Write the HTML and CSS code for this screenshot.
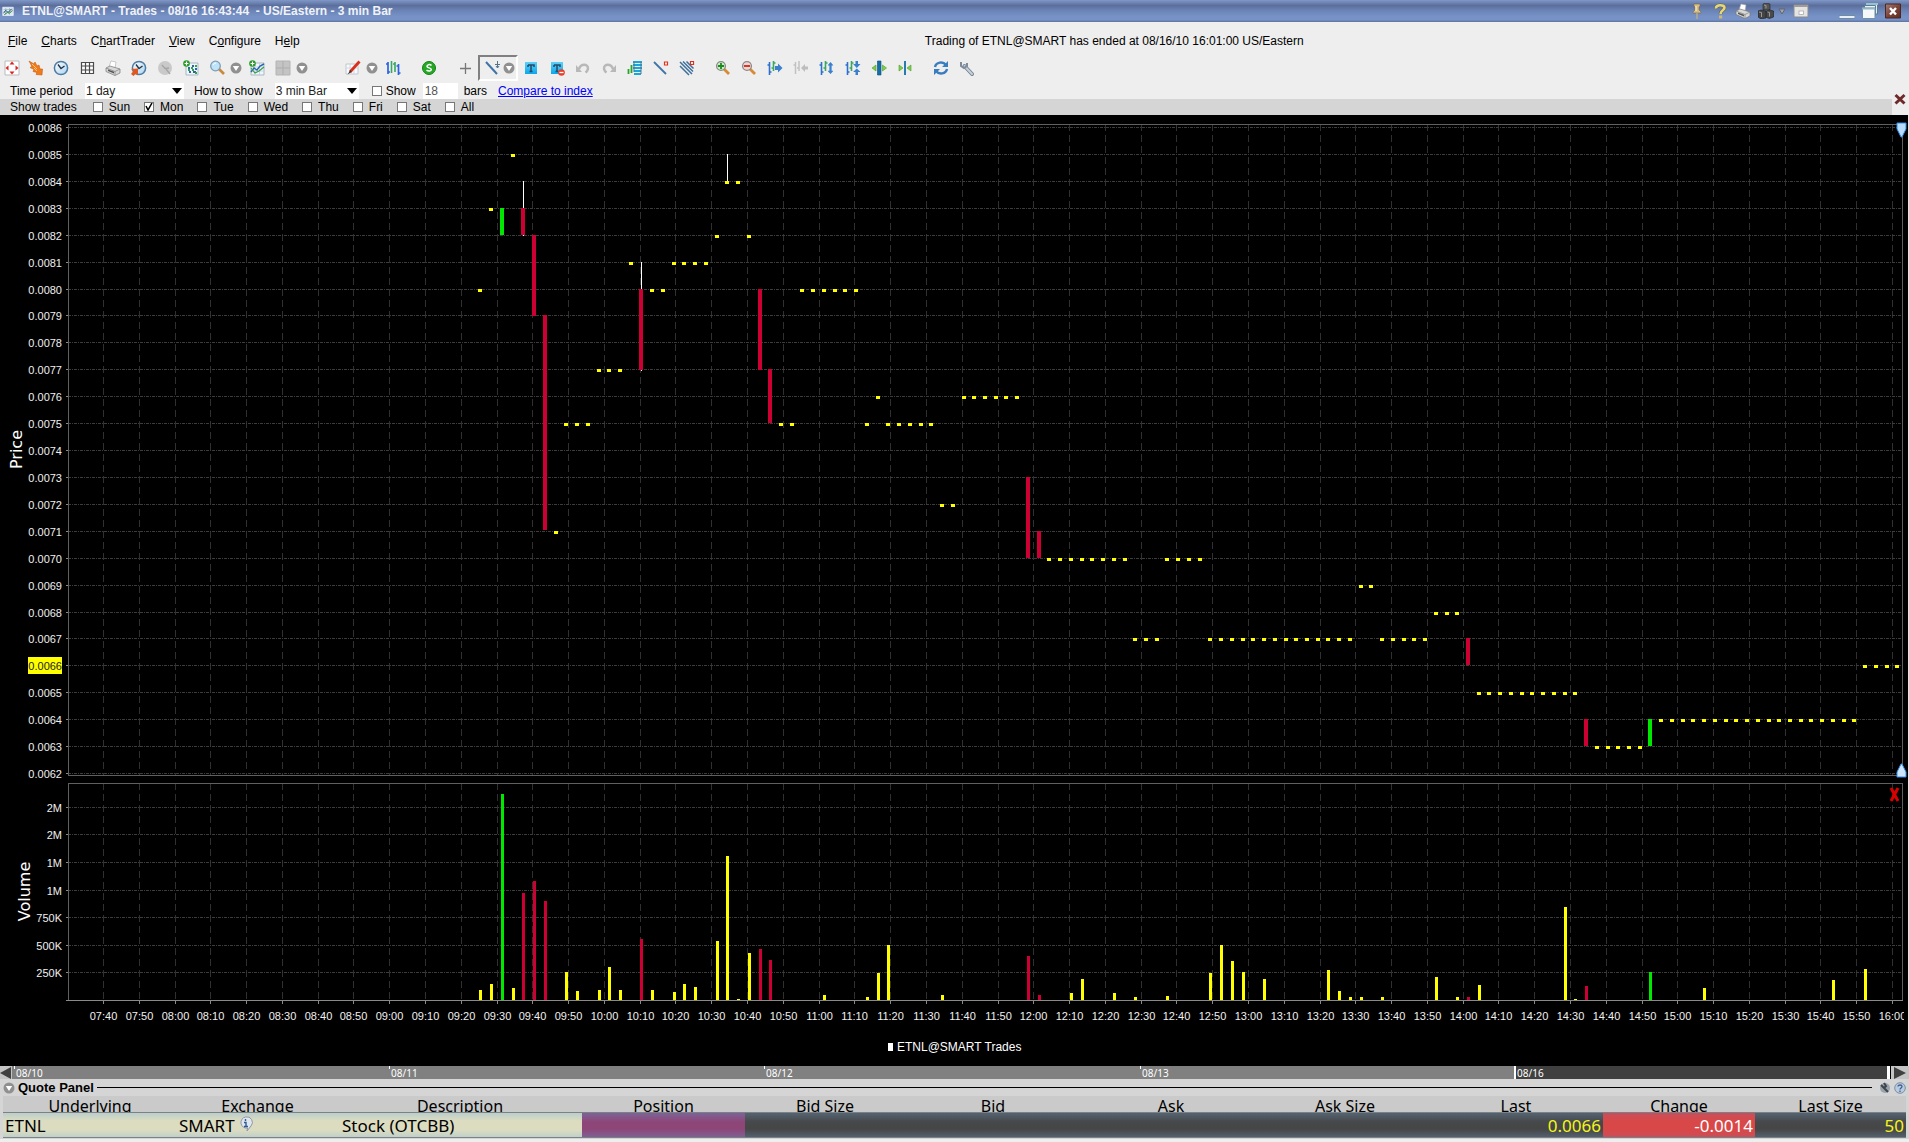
FILE: index.html
```html
<!DOCTYPE html>
<html lang="en">
<head>
<meta charset="utf-8">
<title>ETNL@SMART - Trades</title>
<link rel="stylesheet" href="styles.css">
</head>
<body>
<svg class="defs" aria-hidden="true">
  <defs>
    <linearGradient id="gBlue" x1="0" y1="0" x2="0" y2="1"><stop offset="0" stop-color="#5fd0f8"/><stop offset="1" stop-color="#0aa8ec"/></linearGradient>
    <linearGradient id="gFace" x1="0" y1="0" x2="1" y2="1"><stop offset="0" stop-color="#fff"/><stop offset="1" stop-color="#a9d3f0"/></linearGradient>
    <linearGradient id="gDark" x1="0" y1="0" x2="1" y2="1"><stop offset="0" stop-color="#a08080"/><stop offset=".5" stop-color="#7d4438"/><stop offset="1" stop-color="#5e2a20"/></linearGradient>
  </defs>
  <symbol id="i-drop" viewBox="0 0 12 12"><circle cx="6" cy="6" r="5.5" fill="#909090"/><path d="M2.8 4h6.4L6 9z" fill="#fff"/></symbol>
  <symbol id="i-bars" viewBox="0 0 16 16"><path d="M3.500 2v13M1.500 5h2M3.500 12h2" stroke="#2f6fd0" stroke-width="1.6" fill="none"/><path d="M7.500 1v10M5.500 8h2M7.500 3h2" stroke="#3aa95a" stroke-width="1.6" fill="none"/></symbol>
  <symbol id="i-printer" viewBox="0 0 16 16"><path d="M4 7 6 1l5 1-1 6z" fill="#fff" stroke="#aaa" stroke-width=".6"/><path d="M1 8l4-2 10 3v4l-5 2.500-9-4z" fill="#d8d8d8" stroke="#777" stroke-width=".7"/><path d="M1 8l9 3.500 5-2.500M10 11.500v4" stroke="#888" fill="none" stroke-width=".8"/><path d="M3 9.500l6 2.300v1.700l-6-2.500z" fill="#555"/></symbol>
  <symbol id="i-clock" viewBox="0 0 16 16"><circle cx="8" cy="8" r="6.600" fill="url(#gFace)" stroke="#4b7ca5" stroke-width="1.500"/><path d="M5 4.500 8 8.500l3.500-2.500" stroke="#234" stroke-width="1.300" fill="none"/></symbol>
  <symbol id="i-plus" viewBox="0 0 8 8"><circle cx="4" cy="4" r="3.800" fill="#2a9a2a"/><path d="M4 1.800v4.400M1.800 4h4.400" stroke="#fff" stroke-width="1.300"/></symbol>
  <symbol id="i-chart" viewBox="0 0 16 16"><path d="M2 3h13v12H2z" fill="#eef5fb" stroke="#a9b7c4"/><path d="M2 7h13M2 11h13M6 3v12M10.500 3v12" stroke="#bccbd8" stroke-width=".7"/><path d="M2 12l3-4 3 2 3-4 4-2" stroke="#2b62b5" stroke-width="1.400" fill="none"/><path d="M2 8l4 5 4-2 5-4" stroke="#36a043" stroke-width="1.200" fill="none"/></symbol>
  <symbol id="i-updown" viewBox="0 0 8 16"><path d="M4 0l4 4.500H5.500v7H8L4 16l-4-4.500h2.500v-7H0z" fill="#3b7fcf"/></symbol>
</svg>

<header class="titlebar">
  <svg class="ico" viewBox="0 0 16 16"><path d="M1 3h14v11H1z" fill="#dfe9f2" stroke="#eef"/><path d="M2 6h12M2 9h12M5 4v9M10 4v9" stroke="#91a8b4" stroke-width=".8"/><path d="M2 11l3-4 3 3 5-5" stroke="#175b80" stroke-width="1.300" fill="none"/><path d="M3 13l4-3 3 1 4-4" stroke="#2e8a3a" stroke-width="1.300" fill="none"/></svg>
  <h1>ETNL@SMART - Trades - 08/16 16:43:44&nbsp; - US/Eastern - 3 min Bar</h1>
  <div class="winbtns">
    <button type="button" aria-label="Pin"><svg class="ico" viewBox="0 0 16 16"><path d="M5 1h6v2l-1 1v3l2 2v1H4V9l2-2V4L5 3z" fill="#d6bd83" stroke="#7d6a45" stroke-width=".6"/><path d="M8 10v6" stroke="#c9b184" stroke-width="1.200"/><path d="M7 3v5" stroke="#fff3cc"/></svg></button>
    <button type="button" aria-label="Help"><svg class="ico" viewBox="0 0 16 16"><path d="M4 5.500C3.500 1.500 12.500 1 12.500 4.800 12.500 7.500 8.500 7 8.500 11" fill="none" stroke="#6a6340" stroke-width="3.600"/><path d="M4 5.500C3.500 1.500 12.500 1 12.500 4.800 12.500 7.500 8.500 7 8.500 11" fill="none" stroke="#e2d67e" stroke-width="2.600"/><path d="M7 12.500h3.200v3H7z" fill="#d3b56e"/></svg></button>
    <button type="button" aria-label="Print"><svg class="ico" viewBox="0 0 16 16"><use href="#i-printer"/></svg></button>
    <button type="button" aria-label="Group"><svg class="ico" viewBox="0 0 16 16"><path d="M5 1l3-1 4 1v6H5z" fill="#555" stroke="#222" stroke-width=".6"/><path d="M0 8l3-1 5 1v7l-5 1-3-2z" fill="#444" stroke="#1c1c1c" stroke-width=".6"/><path d="M8.500 8l3-1 4 1v6l-4 1.500-3-1z" fill="#4a4a4a" stroke="#1c1c1c" stroke-width=".6"/><path d="M6 2l2 .5v3M1 9l2.500.5V14M9.500 9l2 .5v4" stroke="#9a9a9a" fill="none"/></svg></button>
    <button type="button" class="slim" aria-label="Group menu"><svg class="ico-s" viewBox="0 0 12 12"><path d="M3 4h6L6 9z" fill="#9fa5ad" stroke="#62676f"/></svg></button>
    <button type="button" class="wide" aria-label="Window mode"><svg class="ico" viewBox="0 0 16 16"><path d="M1 2h14v12H1z" fill="#e4e4e4" stroke="#8c8c8c"/><path d="M1 2h14v2H1z" fill="#a19c98"/><rect x="6" y="8" width="4.500" height="3.500" fill="#fff" stroke="#aaa" stroke-width=".8"/></svg></button>
    <button type="button" class="min" aria-label="Minimize"><svg class="ico" viewBox="0 0 16 16"><path d="M0 12.500h16v3H0z" fill="#e8eef2" stroke="#6b8ea3"/></svg></button>
    <button type="button" aria-label="Restore"><svg class="ico" viewBox="0 0 16 16"><path d="M4.500 0h11v11h-11z" fill="#e6ecf0" stroke="#567d92"/><path d="M4 0h12v2H4z" fill="#9cc0d0"/><path d="M2.500 2.500h11v10h-11z" fill="#eef2f5" stroke="#567d92"/><path d="M.5 5h12.500v10.500H.5z" fill="#f6f8fa" stroke="#6e93a6"/><path d="M0 4.500h13v2H0z" fill="#8fb6c8"/></svg></button>
    <button type="button" aria-label="Close window"><svg class="ico" viewBox="0 0 16 16"><path d="M.5 1h15v14H.5z" fill="url(#gDark)" stroke="#4b2720"/><path d="M5 5l6 6.500M11 5l-6 6.500" stroke="#fff" stroke-width="2.400"/></svg></button>
  </div>
</header>

<div class="menubar">
  <nav class="menus">
    <button type="button"><u>F</u>ile</button>
    <button type="button"><u>C</u>harts</button>
    <button type="button">C<u>h</u>artTrader</button>
    <button type="button"><u>V</u>iew</button>
    <button type="button">C<u>o</u>nfigure</button>
    <button type="button">H<u>e</u>lp</button>
  </nav>
  <p class="notice">Trading of ETNL@SMART has ended at 08/16/10 16:01:00 US/Eastern</p>
</div>

<div class="toolbar">
  <button type="button" class="tight" aria-label="Fit"><svg class="ico" viewBox="0 0 16 16"><path d="M1 1h14v14H1z" fill="#fff" stroke="#bbb"/><path d="M8 1.500 10.500 4.500h-5zM8 14.500 10.500 11.500h-5zM1.500 8l3-2.500v5zM14.500 8l-3-2.500v5z" fill="#e02020"/></svg></button>
  <button type="button" class="tight" aria-label="Pointer"><svg class="ico" viewBox="0 0 16 16"><path d="M1 1l5 3 1-2 2 4 2-1 1 4 2.500 0-.5 6-6-.5 1-2-4-1 1-2-4-2 2-1z" fill="#f07b1a" stroke="#c65a10" stroke-width=".6"/><path d="M4 4l5 5M6 8l3 3" stroke="#ffc07a"/></svg></button>
  <button type="button" aria-label="Time"><svg class="ico" viewBox="0 0 16 16"><use href="#i-clock"/></svg></button>
  <button type="button" aria-label="Grid"><svg class="ico" viewBox="0 0 16 16"><path d="M2.500 2.500h12v11h-12zM6.500 2.500v11M10.500 2.500v11M2.500 6h12M2.500 10h12" fill="#fff" stroke="#4c4c4c" stroke-width="1.200"/></svg></button>
  <button type="button" aria-label="Print chart"><svg class="ico" viewBox="0 0 16 16"><use href="#i-printer"/></svg></button>
  <button type="button" aria-label="Reset time"><svg class="ico" viewBox="0 0 16 16"><use href="#i-clock"/><path d="M0 9l7-.5v7L5 13.500 2.500 16 0 14l2.500-3z" fill="#e2571e"/></svg></button>
  <button type="button" disabled aria-label="Stop time"><svg class="ico" viewBox="0 0 16 16"><circle cx="8" cy="8" r="7" fill="#c9c9c9"/><path d="M5 5l3 3.500L12 8M9 9l4 5" stroke="#a5a5a5" stroke-width="1.300" fill="none"/></svg></button>
  <button type="button" aria-label="Add study"><svg class="ico" viewBox="0 0 16 16"><path d="M3 3h12v12H3z" fill="#eef5fb" stroke="#a9b7c4"/><path d="M5 8h2M9 6h2M12 9h2M6 12h2M10 12h3" stroke="#2b62b5" stroke-width="1.800"/><path d="M8 8h2M5 10h2M12 6h2M9 10h2M12 13h2" stroke="#36a043" stroke-width="1.800"/><svg x="0" y="0" width="7" height="7"><use href="#i-plus"/></svg></svg></button>
  <button type="button" aria-label="Search"><svg class="ico" viewBox="0 0 16 16"><path d="M10 9l5 5" stroke="#c98a3a" stroke-width="2.600"/><circle cx="6.500" cy="6" r="4.800" fill="#bfe4fa" stroke="#7f9db5" stroke-width="1.300"/><path d="M4 5q1-2 3-2" stroke="#fff" fill="none"/></svg></button>
  <button type="button" class="drop" aria-label="Search options"><svg class="ico-s"><use href="#i-drop"/></svg></button>
  <button type="button" aria-label="Add chart"><svg class="ico" viewBox="0 0 16 16"><use href="#i-chart"/><svg x="0" y="0" width="7" height="7"><use href="#i-plus"/></svg></svg></button>
  <button type="button" disabled aria-label="Layout"><svg class="ico" viewBox="0 0 16 16"><path d="M1 1h14v14H1z" fill="#c4c4c4" stroke="#b4b4b4"/><path d="M8 1v14M1 8h14" stroke="#adadad"/></svg></button>
  <button type="button" class="drop" aria-label="Layout options"><svg class="ico-s"><use href="#i-drop"/></svg></button>
  <span class="gap gap-wide"></span>
  <button type="button" aria-label="Draw"><svg class="ico" viewBox="0 0 16 16"><path d="M1 4h12v10H1z" fill="#f8fafc" stroke="#c0c8d0"/><path d="M1 8h12M5 4v10M9 4v10" stroke="#d0d8e0"/><path d="M14.500 1.500 5 12" stroke="#d8301c" stroke-width="2.800"/><path d="M5.500 10 2.500 14.500l4-2.500z" fill="#333"/></svg></button>
  <button type="button" class="drop" aria-label="Draw options"><svg class="ico-s"><use href="#i-drop"/></svg></button>
  <button type="button" aria-label="Bar style"><svg class="ico" viewBox="0 0 16 16"><path d="M3 2v12M1 4h2M3 12h2M13.500 4v11M11.500 6h2M13.500 13h2" stroke="#2d62e0" stroke-width="1.700" fill="none"/><path d="M6.500 1v12M10 2v10M8 4h2" stroke="#38a860" stroke-width="1.600" fill="none"/></svg></button>
  <span class="gap"></span>
  <button type="button" aria-label="Trade"><svg class="ico" viewBox="0 0 16 16"><circle cx="8" cy="8" r="6.500" fill="#25a825" stroke="#168016"/><path d="M10.500 5.500C9 4 5.800 4.500 6 6.500c.2 1.800 4.300 1 4.300 3 0 1.700-3 2-4.800.6" stroke="#fff" stroke-width="1.500" fill="none"/></svg></button>
  <span class="gap"></span>
  <button type="button" aria-label="Crosshair"><svg class="ico" viewBox="0 0 16 16"><path d="M8.500 3v11M3 8.500h11" stroke="#777" stroke-width="1.300"/></svg></button>
  <div class="pressed">
    <button type="button" aria-label="Trend line"><svg class="ico" viewBox="0 0 16 16"><path d="M1 2l11 12" stroke="#3f74a8" stroke-width="2"/><path d="M12.500 1v7M10 4.500h5M11 6l1.500 2L14 6" stroke="#56748c" fill="none"/></svg></button>
    <button type="button" class="drop" aria-label="Line options"><svg class="ico-s"><use href="#i-drop"/></svg></button>
  </div>
  <button type="button" aria-label="Text"><svg class="ico" viewBox="0 0 16 16"><path d="M2 2h12v12H2z" fill="url(#gBlue)"/><path d="M5 5h6v2M5 5v2M8 5v7M6.500 11.500h3" stroke="#274a66" stroke-width="1.500" fill="none"/></svg></button>
  <button type="button" aria-label="Remove text"><svg class="ico" viewBox="0 0 16 16"><path d="M2 2h12v12H2z" fill="url(#gBlue)"/><path d="M5 5h6v2M5 5v2M8 5v7M6.500 11.500h3" stroke="#274a66" stroke-width="1.500" fill="none"/><circle cx="12.500" cy="12.500" r="3.300" fill="#e8402a"/><path d="M10.500 12.500h4" stroke="#fff" stroke-width="1.300"/></svg></button>
  <button type="button" disabled aria-label="Undo"><svg class="ico" viewBox="0 0 16 16"><path d="M4 9C6 3 13 4 13 8c0 2-1 3.500-2.500 4.500" fill="none" stroke="#b8b8b8" stroke-width="2.400"/><path d="M1 5v7h6z" fill="#b8b8b8"/></svg></button>
  <button type="button" disabled aria-label="Redo"><svg class="ico" viewBox="0 0 16 16"><path d="M12 9C10 3 3 4 3 8c0 2 1 3.500 2.500 4.500" fill="none" stroke="#b8b8b8" stroke-width="2.400"/><path d="M15 5v7H9z" fill="#b8b8b8"/></svg></button>
  <button type="button" aria-label="Copy chart"><svg class="ico" viewBox="0 0 16 16"><path d="M6 2h9M6 5h9M6 8h9M7 11h7M7 14h7" stroke="#18a7d8" stroke-width="1.800"/><path d="M7 2v10M14 2v12" stroke="#4b7a96"/><path d="M1.500 9v5M4.500 5v8" stroke="#28a428" stroke-width="1.800"/></svg></button>
  <button type="button" aria-label="Delete line"><svg class="ico" viewBox="0 0 16 16"><path d="M1 2l12 12" stroke="#3f74a8" stroke-width="1.800"/><path d="M11.500 2h3v3h-3z" fill="#fff" stroke="#e03020" stroke-width="1.200"/></svg></button>
  <button type="button" aria-label="Delete all lines"><svg class="ico" viewBox="0 0 16 16"><path d="M1 2l12 12M4 1.500l10 10M1 6l9 9M7.500 1.500l7 7" stroke="#3f6f9c" stroke-width="1.500"/><path d="M11.500 1.500h3v3h-3z" fill="#fff" stroke="#e03020" stroke-width="1.200"/></svg></button>
  <span class="gap"></span>
  <button type="button" aria-label="Zoom in"><svg class="ico" viewBox="0 0 16 16"><path d="M9 9l5 5" stroke="#d88b35" stroke-width="2.800"/><circle cx="6" cy="6" r="4.400" fill="#cdebc5" stroke="#888" stroke-width="1.300"/><path d="M6 3v6M3 6h6" stroke="#1c8a1c" stroke-width="1.800"/></svg></button>
  <button type="button" aria-label="Zoom out"><svg class="ico" viewBox="0 0 16 16"><path d="M9 9l5 5" stroke="#d88b35" stroke-width="2.800"/><circle cx="6" cy="6" r="4.400" fill="#f5d5d0" stroke="#888" stroke-width="1.300"/><path d="M3 6h6" stroke="#d02818" stroke-width="1.800"/></svg></button>
  <button type="button" aria-label="Widen"><svg class="ico" viewBox="0 0 16 16"><svg x="-1" width="16" height="16"><use href="#i-bars"/></svg><path d="M8 6h3V3.500L15.500 8 11 12.500V10H8z" fill="#3b7fcf"/></svg></button>
  <button type="button" disabled aria-label="Narrow"><svg class="ico" viewBox="0 0 16 16"><path d="M2.500 2v12M.5 5h2M6 1v10M4 8h2" stroke="#c2c2c2" stroke-width="1.500"/><path d="M15 6.500h-3V4L8 8l4 4V9.500h3z" fill="#bdbdbd"/></svg></button>
  <button type="button" aria-label="Stretch price"><svg class="ico" viewBox="0 0 16 16"><svg x="-1" width="16" height="16"><use href="#i-bars"/></svg><svg x="8.500" y="1" width="6" height="14"><use href="#i-updown"/></svg></svg></button>
  <button type="button" aria-label="Compress price"><svg class="ico" viewBox="0 0 16 16"><svg x="-1" width="16" height="16"><use href="#i-bars"/></svg><path d="M10.500 1h2.500v3h2.500l-3.700 4-3.700-4h2.400zM10.500 15h2.500v-3h2.500l-3.700-3.500L8.100 12h2.400z" fill="#3b7fcf"/></svg></button>
  <button type="button" aria-label="Spread"><svg class="ico" viewBox="0 0 16 16"><path d="M6.500 1h3.500v14H6.500z" fill="#146fa8" stroke="#0a4a78" stroke-width=".6"/><path d="M5 5v6L1 8zM11.500 5v6l4-3z" fill="#7bd04a" stroke="#4f9a2a" stroke-width=".6"/></svg></button>
  <button type="button" aria-label="Tighten"><svg class="ico" viewBox="0 0 16 16"><path d="M8 1v14" stroke="#146fa8" stroke-width="1.800"/><path d="M2 5v6l4-3zM14 5v6l-4-3z" fill="#7bd04a" stroke="#4f9a2a" stroke-width=".6"/></svg></button>
  <span class="gap"></span>
  <button type="button" aria-label="Refresh"><svg class="ico" viewBox="0 0 16 16"><path d="M2 7c1-5 8-6 11-2M14 9c-1 5-8 6-11 2" fill="none" stroke="#3a7cc0" stroke-width="2.400"/><path d="M15 1v6H9zM1 15V9h6z" fill="#3a7cc0"/></svg></button>
  <button type="button" aria-label="Settings"><svg class="ico" viewBox="0 0 16 16"><path d="M5.500 6l7.500 8" stroke="#6d7b8c" stroke-width="3.800" stroke-linecap="round"/><path d="M5.500 6l7.500 8" stroke="#c6d0da" stroke-width="2.200" stroke-linecap="round"/><path d="M2 2v4l3 2 3-2V3" fill="none" stroke="#7d8b9b" stroke-width="2"/></svg></button>
</div>

<section class="options" aria-label="Chart options">
  <div class="row period">
    <label for="period">Time period</label>
    <select id="period" class="sel-period"><option>1 day</option></select>
    <label for="barsize">How to show</label>
    <select id="barsize" class="sel-bar"><option>3 min Bar</option></select>
    <label class="check show"><input type="checkbox">Show</label>
    <input type="text" class="count" id="count" value="18" aria-label="Number of bars">
    <label for="count">bars</label>
    <a href="#compare">Compare to index</a>
  </div>
  <div class="row days">
    <span>Show trades</span>
    <label class="check"><input type="checkbox">Sun</label>
    <label class="check"><input type="checkbox" checked>Mon</label>
    <label class="check"><input type="checkbox">Tue</label>
    <label class="check"><input type="checkbox">Wed</label>
    <label class="check"><input type="checkbox">Thu</label>
    <label class="check"><input type="checkbox">Fri</label>
    <label class="check"><input type="checkbox">Sat</label>
    <label class="check"><input type="checkbox">All</label>
  </div>
  <button type="button" class="close" aria-label="Close options"><svg class="ico-s" viewBox="0 0 12 12"><path d="M1.500 2l9 8.500M10.500 2l-9 8.500" stroke="#6e2a2a" stroke-width="3"/></svg></button>
</section>

<svg id="chart" class="chart" role="img" aria-label="ETNL@SMART trades, price and volume"></svg>

<div class="timeline">
  <button type="button" class="step" aria-label="Scroll back"><svg class="ico-s" viewBox="0 0 12 12"><path d="M11 0v12L0 6z" fill="#404040"/></svg></button>
  <span class="day">08/10</span>
  <span class="day">08/11</span>
  <span class="day">08/12</span>
  <span class="day">08/13</span>
  <span class="day current">08/16</span>
  <button type="button" class="step" aria-label="Scroll forward"><svg class="ico-s" viewBox="0 0 12 12"><path d="M0 0v12L12 6z" fill="#404040"/></svg></button>
</div>

<section class="quote">
  <div class="quote-head">
    <svg class="ico-s"><use href="#i-drop"/></svg>
    <h2>Quote Panel</h2>
    <hr>
    <svg class="ico-s" viewBox="0 0 12 12"><circle cx="6" cy="6" r="5" fill="#9aa4ac"/><path d="M2 3l3 3 2-2-2-3M5 6l4 4" stroke="#3e464d" stroke-width="2" fill="none"/></svg>
    <svg class="ico-s" viewBox="0 0 12 12"><circle cx="6" cy="6" r="5.300" fill="#b8cbe0" stroke="#7d8fa3"/><path d="M4 4.500C4 2.500 8 2.500 8 4.500 8 6 6 6 6 7.500M6 8.500V10" stroke="#3d6090" stroke-width="1.300" fill="none"/></svg>
  </div>
  <table>
    <colgroup><col class="c1"><col class="c2"><col class="c3"><col class="c4"><col class="c5"><col class="c6"><col class="c7"><col class="c8"><col class="c9"><col class="c10"><col class="c11"></colgroup>
    <thead><tr><th><span>Underlying</span></th><th><span>Exchange</span></th><th><span>Description</span></th><th><span>Position</span></th><th><span>Bid Size</span></th><th><span>Bid</span></th><th><span>Ask</span></th><th><span>Ask Size</span></th><th><span>Last</span></th><th><span>Change</span></th><th><span>Last Size</span></th></tr></thead>
    <tbody><tr>
      <td class="id">ETNL</td>
      <td class="id">SMART <svg class="info" viewBox="0 0 14 16"><path d="M6.500 1a5.500 5.500 0 1 0 2 11L8 15l4-5A5.500 5.500 0 0 0 6.500 1z" fill="#dfe6ef" stroke="#8b98a8"/><path d="M6.500 3v2M5 6.500h2v4M5 10.500h4" stroke="#31598f" stroke-width="1.400" fill="none"/></svg></td>
      <td class="id desc">Stock (OTCBB)</td>
      <td class="pos"></td><td></td><td></td><td></td><td></td>
      <td class="num">0.0066</td>
      <td class="num down">-0.0014</td>
      <td class="num">50</td>
    </tr></tbody>
  </table>
</section>
<script src="chart.js"></script>
</body>
</html>
```
FILE: styles.css
```css
* { box-sizing: border-box; }

body {
  margin: 0;
  min-height: 100vh;
  display: flex;
  flex-direction: column;
  background: #eee;
  color: #000;
  font: 12px/16px "Liberation Sans", Arial, sans-serif;
}

h1, h2, p { margin: 0; }

button {
  padding: 0;
  border: 0;
  background: none;
  color: inherit;
  font: inherit;
}

.defs { position: absolute; width: 0; height: 0; }
.ico { display: block; flex: none; width: 16px; height: 16px; }
.ico-s { display: block; flex: none; width: 12px; height: 12px; }

/* Title bar */
.titlebar {
  display: flex;
  align-items: center;
  height: 22px;
  padding-right: 5px;
  background: linear-gradient(#8098c8, #5c6f9c 25%, #6c85b8 50%, #7692c6 75%, #7692c6 90%, #5d719e);
  color: #f0f2f8;
}
.titlebar > .ico { width: 12px; height: 14px; margin: 0 8px 0 2px; }
.titlebar h1 { font-size: 12px; font-weight: bold; flex: 1; }
.winbtns { display: flex; align-items: center; }
.winbtns button { width: 23px; display: flex; justify-content: center; }
.winbtns .slim { width: 10px; }
.winbtns .wide { width: 22px; margin: 0 9px 0 3px; }
.winbtns .min { margin-left: 14px; }

/* Menu */
.menubar { display: flex; align-items: center; height: 33px; padding: 5px 8px 0; }
.menus { display: flex; gap: 14px; }
.notice { flex: 1; padding-left: 28px; text-align: center; }

/* Toolbar */
.toolbar { display: flex; align-items: center; height: 27px; padding-bottom: 1px; }
.toolbar button { width: 26px; height: 24px; display: flex; align-items: center; justify-content: center; }
.toolbar .tight { width: 24px; }
.toolbar .drop { width: 16px; margin-left: -2px; }
.gap { width: 10px; }
.gap-wide { width: 30px; }
.pressed {
  display: flex;
  width: 40px;
  height: 26px;
  align-items: center;
  border: 2px solid #fff;
  border-top-color: #808080;
  border-left-color: #808080;
}
.pressed .ico { margin-left: 2px; }

/* Option rows */
.options { display: grid; grid-template-columns: 1fr 17px; grid-template-rows: 17px 16px; }
.row { display: flex; align-items: center; padding-left: 10px; }
.days { grid-row: 2; gap: 14px; background: #d5d5d5; }
.days span { margin-right: 2px; }
.close { grid-area: 1 / 2 / 3 / 3; display: flex; align-items: center; padding-left: 2px; }

select, .count {
  height: 16px;
  margin: 0;
  padding: 0 0 0 1px;
  border: 0;
  border-radius: 0;
  background: #fff;
  color: #222;
  font: inherit;
}
select {
  appearance: none;
  background: #fff url("data:image/svg+xml,%3Csvg xmlns='http://www.w3.org/2000/svg' width='10' height='6'%3E%3Cpath d='M0 0h10L5 6z'/%3E%3C/svg%3E") no-repeat right 2px center;
}
.sel-period { width: 99px; margin: 0 10px 0 12px; }
.sel-bar { width: 84px; margin: 0 13px 0 12px; }
.count { width: 35px; margin: 0 6px 0 7px; color: #555; padding-left: 2px; }
.row a { margin-left: 11px; color: #00f; }

.check { display: flex; align-items: center; gap: 7px; }
.days .check { gap: 6px; }
.check.show { gap: 4px; }
.check input {
  appearance: none;
  width: 10px;
  height: 10px;
  margin: 0;
  border: 1px solid #777;
  background: #fff;
}
.check input:checked {
  background: #fff url("data:image/svg+xml,%3Csvg xmlns='http://www.w3.org/2000/svg' viewBox='0 0 8 8'%3E%3Cpath d='M1 3l2 4 4-7' fill='none' stroke='%23000' stroke-width='1.5'/%3E%3C/svg%3E") center / 8px 8px no-repeat;
}

/* Chart */
.chart { display: block; flex: 1 1 0; width: 100%; min-height: 500px; background: #000; border-right: 1px solid #e4e4e4; }
.chart text { fill: #f0f0f0; font-family: "Liberation Sans", Arial, sans-serif; font-size: 11px; }
.chart .legend { font-size: 12px; fill: #fff; }
.chart .title { font-family: "DejaVu Sans", sans-serif; font-size: 16px; fill: #fff; }
.chart .mark { fill: #222; }
.frame { fill: none; stroke: #606060; }
.axis { stroke: #8a8a8a; }
.grid-h { stroke: #3c3c3c; stroke-dasharray: 3 1 1 1; }
.grid-v { stroke: #303030; stroke-dasharray: 7 4; }
.flat { fill: #ff0; }
.up { fill: #00e800; }
.down-bar { fill: #cc0033; }
.wick { fill: #fff; }

/* Timeline */
.timeline {
  display: grid;
  grid-template-columns: 12px 377fr 375fr 376fr 374fr 376fr 19px;
  height: 13px;
  background: #808080;
}
.day {
  padding-left: 2px;
  color: #fff;
  font: 10px/14px "Noto Sans", sans-serif;
  background: linear-gradient(#fff, #fff) 0 0 / 1px 3px no-repeat;
}
.day:nth-of-type(1) { margin-left: 2px; }
.current { padding-left: 1px; border: solid #fff; border-width: 0 3px 0 2px; background: #404040; }
.step { background: #c4c4c4; display: flex; align-items: center; justify-content: flex-end; overflow: hidden; }
.step:last-child { padding-right: 3px; border-left: 1px solid #000; }

/* Quote panel */
.quote { background: #d5d5d5; padding: 0 3px 1px; margin-bottom: 3px; }
.quote-head { display: flex; align-items: center; height: 17px; gap: 3px; }
.quote-head h2 { font-size: 13px; line-height: 16px; }
.quote-head hr { flex: 1; margin: 0 4px 0 0; border: 0; border-top: 1px solid #000; }

table {
  width: 100%;
  table-layout: fixed;
  border-collapse: collapse;
  font: 17px/24px "Noto Sans", sans-serif;
}
.c1 { width: 174px; } .c2 { width: 161px; } .c3 { width: 244px; } .c4 { width: 163px; }
.c5 { width: 160px; } .c6 { width: 176px; } .c7 { width: 180px; } .c8 { width: 168px; }
.c9 { width: 174px; } .c10 { width: 152px; } .c11 { width: 151px; }
thead tr { height: 16px; background: #cacaca; }
th { height: 16px; padding: 0; font-size: 16px; font-weight: normal; }
th span { display: block; height: 16px; line-height: 20px; overflow: hidden; }
tbody td {
  height: 25px;
  padding: 0 2px;
  line-height: 23px;
  border: solid #7a8285;
  border-width: 1px 0;
  background: linear-gradient(#546270, #46484a 35%, #464646 65%, #546270);
}
tbody td.id { background: linear-gradient(#bccfca, #dcdcc0 30%, #dcdcc0 70%, #bccfca); }
tbody td.desc { padding-left: 4px; }
tbody td.pos { background: linear-gradient(#7d6294, #8e4678 35%, #8e4678 65%, #7d6294); }
tbody td.num { color: #f5f51a; text-align: right; }
tbody td.down { color: #fff; background: linear-gradient(#c64f5c, #d94848 30%, #d94848 70%, #c64f5c); }
.info { width: 14px; height: 16px; }
```
FILE: chart.js
```js
const svg = document.getElementById('chart');
const NS = 'http://www.w3.org/2000/svg';

// Price runs: [first bar, last bar, price] in ten-thousandths, open = close
const flats = [
  [0, 0, 80], [1, 1, 83], [3, 3, 85], [7, 7, 71], [8, 10, 75], [11, 13, 77], [14, 14, 81],
  [16, 17, 80], [18, 21, 81], [22, 22, 82], [23, 24, 84], [25, 25, 82], [28, 29, 75],
  [30, 35, 80], [36, 36, 75], [37, 37, 76], [38, 42, 75], [43, 44, 72], [45, 50, 76],
  [53, 60, 70], [61, 63, 67], [64, 67, 70], [68, 81, 67], [82, 83, 69], [84, 88, 67],
  [89, 91, 68], [93, 102, 65], [104, 108, 63], [110, 128, 64], [129, 132, 66]
];

// Moving bars: [bar, open, close, high]
const moves = [
  [2, 82, 83, 83], [4, 83, 82, 84], [5, 82, 79, 82], [6, 79, 71, 79], [15, 80, 77, 81],
  [26, 80, 77, 80], [27, 77, 75, 77], [51, 73, 70, 73], [52, 71, 70, 71],
  [92, 67, 66, 67], [103, 64, 63, 64], [109, 63, 64, 64]
];

// Volume in thousands: [bar, volume]
const volumes = [
  [0, 95], [1, 145], [2, 1865], [3, 110], [4, 969], [5, 1078], [6, 897], [8, 253], [9, 82],
  [11, 91], [12, 299], [13, 91], [15, 553], [16, 91], [18, 73], [19, 145], [20, 118],
  [22, 535], [23, 1305], [24, 10], [25, 426], [26, 462], [27, 362], [32, 46], [36, 27],
  [37, 245], [38, 498], [43, 46], [51, 399], [52, 46], [55, 64], [56, 190], [59, 64],
  [61, 27], [64, 37], [68, 245], [69, 498], [70, 353], [71, 254], [73, 190], [79, 272],
  [80, 82], [81, 27], [82, 27], [84, 27], [89, 208], [91, 27], [92, 27], [93, 136],
  [101, 843], [102, 10], [103, 127], [109, 254], [114, 109], [126, 181], [129, 281]
];

function add(name, attrs, text) {
  const el = document.createElementNS(NS, name);
  for (const key in attrs) el.setAttribute(key, attrs[key]);
  if (text) el.textContent = text;
  svg.appendChild(el);
}

function rect(cls, x, y, w, h) {
  add('rect', { class: cls, x: Math.round(x), y: Math.round(y), width: w, height: Math.round(h) });
}

function line(cls, x1, y1, x2, y2) {
  add('line', { class: cls, x1: x1, y1: y1, x2: x2, y2: y2 });
}

function draw() {
  svg.replaceChildren();
  const W = svg.clientWidth, H = svg.clientHeight;
  const left = 68, right = W - 5, top = 9;
  const base = H - 66, volTop = base - 217, priceBottom = volTop - 8;
  const minute = (right - 11 - 103) / 500;
  const tx = m => 103 + m * minute;
  const bx = k => tx(105.5 + k * 3);
  const py = p => top + 3 + (86 - p) * (priceBottom - 2 - top - 3) / 24;
  const vy = v => base - v * 0.1105;

  for (let i = 0; i <= 50; i++) {
    const x = Math.round(tx(i * 10)) + 0.5, total = 460 + i * 10;
    line('grid-v', x, top, x, priceBottom);
    line('grid-v', x, volTop, x, base);
    line('axis', x, base, x, base + 4);
    const label = String(Math.floor(total / 60)).padStart(2, '0') + ':' + String(total % 60).padStart(2, '0');
    add('text', { x: x, y: base + 20, 'text-anchor': 'middle' }, label);
  }
  rect('', right + 1, base + 6, 8, 20);

  for (let p = 86; p >= 62; p--) {
    const y = Math.round(py(p)) + 0.5;
    line('grid-h', left, y, right, y);
    line('axis', left - 2, y, left, y);
    if (p === 66) rect('flat', 28, y - 9, 34, 17);
    add('text', { x: 62, y: y + 4, 'text-anchor': 'end', class: p === 66 ? 'mark' : '' }, '0.00' + p);
  }
  ['250K', '500K', '750K', '1M', '1M', '2M', '2M'].forEach((label, i) => {
    const y = Math.round(vy((i + 1) * 250)) + 0.5;
    line('grid-h', left, y, right, y);
    line('axis', left - 2, y, left, y);
    add('text', { x: 62, y: y + 4, 'text-anchor': 'end' }, label);
  });

  add('rect', { class: 'frame', x: left + 0.5, y: top + 0.5, width: right - left - 1, height: priceBottom - top });
  add('rect', { class: 'frame', x: left + 0.5, y: volTop + 0.5, width: right - left - 1, height: base - volTop });
  line('axis', left - 2, base + 0.5, right, base + 0.5);

  flats.forEach(([a, b, p]) => {
    for (let k = a; k <= b; k++) rect('flat', bx(k) - 2, py(p), 4, 3);
  });
  rect('wick', bx(23), py(85), 1, py(84) - py(85));
  const tone = {};
  moves.forEach(([k, open, close, high]) => {
    tone[k] = close > open ? 'up' : 'down-bar';
    const hi = Math.max(open, close), lo = Math.min(open, close);
    if (high > hi) rect('wick', bx(k), py(high), 1, py(lo) - py(high) + 1);
    rect(tone[k], bx(k) - 2, py(hi), 4, py(lo) - py(hi));
  });
  volumes.forEach(([k, v]) => rect(tone[k] || 'flat', bx(k) - 1, vy(v), 3, base - vy(v)));

  const priceMid = (top + priceBottom) / 2 + 20, volMid = (volTop + base) / 2;
  add('text', { class: 'title', 'text-anchor': 'middle', transform: `translate(22 ${priceMid - 20}) rotate(-90)` }, 'Price');
  add('text', { class: 'title', 'text-anchor': 'middle', transform: `translate(30 ${volMid}) rotate(-90)` }, 'Volume');

  rect('wick', W / 2 - 66, base + 43, 5, 8);
  add('text', { class: 'legend', x: W / 2 - 57, y: base + 51 }, 'ETNL@SMART Trades');

  const px = right - 2;
  add('path', { d: `M${px - 4} ${top - 1}h9v6l-4 8h-1l-4 -8z`, fill: '#b8dcff', stroke: '#2f8de4' });
  add('path', { d: `M${px - 4} ${priceBottom + 2}h9v-5l-4 -8h-1l-4 8z`, fill: '#cfe6ff', stroke: '#2f8de4' });
  add('path', { d: `M${right - 12} ${volTop + 5}l7 13m0 -13l-7 13`, stroke: '#d80000', 'stroke-width': 3 });
}

draw();
addEventListener('resize', draw);
```
